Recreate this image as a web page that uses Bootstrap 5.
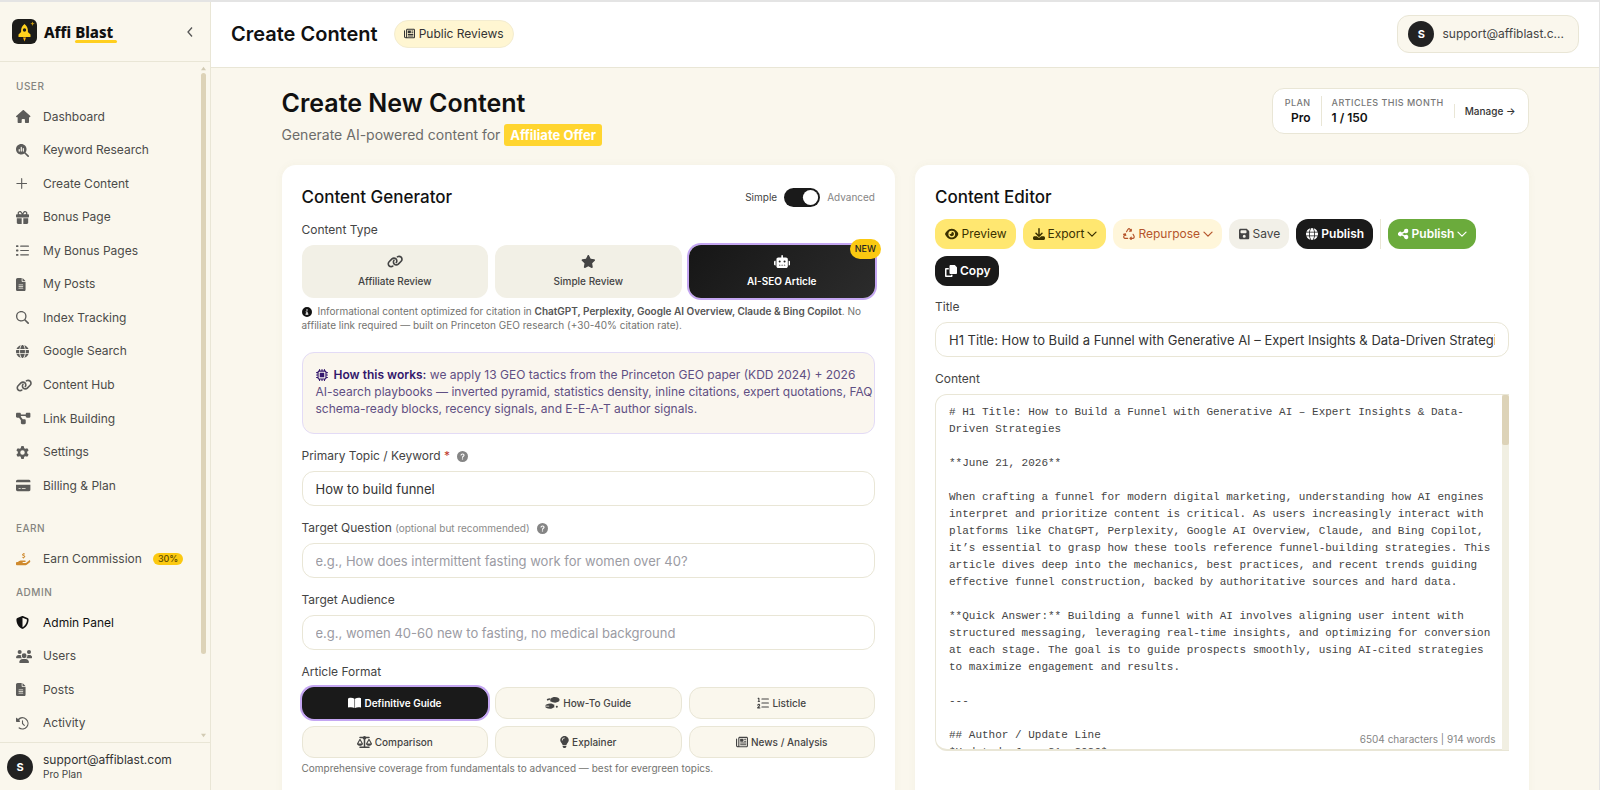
<!DOCTYPE html>
<html lang="en">
<head>
<meta charset="utf-8">
<meta name="viewport" content="width=device-width, initial-scale=1">
<title>Create Content – Affi Blast</title>
<link href="https://cdn.jsdelivr.net/npm/bootstrap@5.3.0/dist/css/bootstrap.min.css" rel="stylesheet">
<style>
:root{--cream:#faf7ed;--line:#e9e6d6;--ink:#1a1a1a;--sand:#ddd3b8}
body{font-family:Inter,"Liberation Sans",sans-serif;font-size:12px;line-height:18px;color:#111;background:var(--cream)}
.ic{height:1em;width:auto;fill:currentColor;flex:none;display:inline-block;vertical-align:-2px}
.shell{height:100vh;border-top:2px solid #e4e4e4;border-right:1px solid #e4e4e4}
/* sidebar */
.side{width:211px;flex:none;border-right:1px solid var(--line);background:var(--cream)}
.side-top{height:60px;border-bottom:1px solid var(--line);padding:0 12px}
.brand{font-family:"Noto Sans","Liberation Sans",sans-serif;font-size:15px;font-weight:800;color:#111;text-decoration:none;gap:7px}
.brand u{text-decoration:none;position:relative}
.brand u::after{content:"";position:absolute;left:0;right:-4px;bottom:-1px;height:3px;border-radius:2px;background:#ffcf1f}
.collapse-btn{border:0;background:none;color:#555;padding:4px}
.side-scroll{position:relative;min-height:0}
.side-nav{overflow:hidden;padding:8px 12px 2px 16px;height:100%}
.side-nav h2{flex:none;height:30px;line-height:32px;margin:0;font-size:10px;font-weight:500;color:#858580;letter-spacing:.05em}
.side-nav h2.gap-top{margin-top:10px}
.side-nav a{flex:1 1 0;min-height:30px;color:#4b4b49;text-decoration:none}
.side-nav a .slot{width:27px;flex:none;display:flex;color:#5c5c5a;font-size:13px}
.side-nav a .slot.earn{color:#cf8a2e}
.side-nav a.strong,.side-nav a.strong .slot{color:#111}
.pct{font-size:9px;line-height:12px;font-weight:500;background:#fbc911;color:#5c4a00;padding:0 5px;margin-left:11px}
.bar-thumb{position:absolute;right:4px;top:11px;bottom:88px;width:5px;border-radius:3px;background:var(--sand)}
.bar-arrow{position:absolute;right:4px;width:5px;height:5px;fill:#d2cbb4}
.side-user{height:48px;border-top:1px solid var(--line);padding-left:7px;gap:10px;color:#333}
.side-user .mail{line-height:15px}
.side-user .tier{font-size:10px;line-height:14px;color:#444}
.ava{width:26px;height:26px;border-radius:50%;background:#222;color:#fff;font-size:11px;font-weight:700;flex:none}
/* header */
.top-bar{height:66px;background:#fff;border-bottom:1px solid var(--line);padding:0 20px 2px}
.top-bar h1{font-size:20px;line-height:24px;font-weight:600;margin:0}
.pill{height:28px;border:1px solid #f3ecd0;background:#fff6d2;color:#333;font-size:12px;padding:0 9px;gap:4px}
.pill .ic{font-size:11px}
.account{height:38px;border:1px solid var(--line);border-radius:12px;background:var(--cream);padding:0 14px 0 10px;gap:8px;color:#444}
/* page */
.page{max-width:1247px;margin:0 auto;padding-top:20px}
.page-head{height:77px}
.page-head h2{font-size:25px;line-height:30px;font-weight:600;margin:0 0 5px}
.page-head p{font-size:14px;line-height:23px;color:#6c6c6a;margin:0}
.offer{background:#ffd52f;color:#fff;font-size:13px;font-weight:700;border-radius:3px;padding:3px 6px}
.plan{height:46px;border:1px solid var(--line);border-radius:12px;background:#fff;padding:0 12px}
.plan small{display:block;font-size:9px;line-height:14px;font-weight:500;color:#777;letter-spacing:.05em}
.plan b{display:block;font-size:12px;line-height:16px;font-weight:600}
.plan .tall,.plan .short{width:1px;background:var(--line);margin:0 10px;height:30px}
.plan .short{height:14px}
.plan a{font-size:10px;font-weight:500;color:#333;text-decoration:none}
.duo{display:grid;grid-template-columns:1fr 1fr;gap:20px}
.panel{background:#fff;border-radius:14px;padding:20px 20px 56px;box-shadow:0 0 8px rgba(120,110,60,.05);min-width:0}
.panel h3{font-size:17px;line-height:24px;font-weight:500;margin:0}
.trio{display:grid;grid-template-columns:repeat(3,1fr);gap:7px}
.lab{display:block;line-height:18px;font-size:12px;color:#444;margin-bottom:6px}
.lab span{font-size:10px;color:#8a8a88}
.lab .ic{color:#858585;font-size:11px;margin-left:4px}
.lab i{color:#c0392b;font-style:normal}
.field{height:35px;border:1px solid var(--line);border-radius:12px;font-size:13px;line-height:20px;padding:0 13px;color:#333;margin-bottom:13px}
.field::placeholder{color:#9b9ba3;opacity:1}
.sw{font-size:10px;gap:7px;color:#444}
.sw .dim{color:#858585}
.form-check-input.tog{width:36px;height:19px;margin:0;border:0;border-radius:10px;float:none}
.form-check-input.tog:checked{background-color:#1a1a1a;background-image:url("data:image/svg+xml,%3csvg xmlns='http://www.w3.org/2000/svg' viewBox='-4 -4 8 8'%3e%3ccircle r='3.2' fill='%23fff'/%3e%3c/svg%3e")}
.tile{height:53px;border:0;border-radius:12px;background:#f2f0e6;color:#444;font-size:10px;line-height:14px;font-weight:500;padding:0;position:relative}
.tile .ic{font-size:13px;margin-bottom:6px}
.tile.on{background:linear-gradient(135deg,#161616,#2c2c2c);color:#fff;font-weight:600;box-shadow:0 0 0 2px #c4a6f2}
.new{position:absolute;right:-6px;top:-6px;height:20px;line-height:20px;padding:0 5px;background:#fbc911;color:#222;font-size:9px;font-weight:500}
.hint{font-size:10px;line-height:14px;color:#73736f;margin:6px 0 0}
.hint.last{margin-top:3px}
.hint b{font-weight:600;color:#555}
.hint .ic{color:#111;margin-right:6px}
.note{border:1px solid #e3dbf6;border-radius:12px;background:#faf6ee;padding:13px 1px 13px 13px;height:82px;font-size:12px;line-height:17px;color:#5f4f83;margin:20px 0 13px}
.note b{font-weight:600}
.note b,.note .ic{color:#33176b}
.note .ic{margin-right:6px}
.fmt{height:32px;border:1px solid var(--line);border-radius:12px;background:var(--cream);color:#444;font-size:10px;font-weight:500;padding:0;gap:3px}
.fmt .ic{font-size:12px}
.fmt.on{background:#1a1a1a;color:#fff;font-weight:600;border-color:#1a1a1a;box-shadow:0 0 0 2px #c4a6f2}
.tools{gap:7px;margin:10px 0 12px}
.act{height:30px;border:0;border-radius:12px;font-size:12px;padding:0 9px 0 10px;gap:3px}
.act .ic{font-size:12px}
.act .dn{font-size:10px}
.y{background:#ffe770;color:#3a3000}.o{background:#fff6da;color:#b5552b}.g{background:#f2f0e8;color:#444}
.k{background:#1a1a1a;color:#fff;font-weight:600}.gr{background:#6bab3c;color:#fff;font-weight:600}
.vr-thin{width:1px;height:30px;background:var(--line)}
.ed-wrap{position:relative;height:357px}
.ed{width:100%;height:100%;resize:none;overflow:hidden;border:1px solid var(--line);border-bottom-width:2px;border-radius:12px 0 0 12px;padding:9px 8px 0 13px;font:11px/17px "Liberation Mono",monospace;color:#444;display:block}
.ed:focus{outline:none}
.ed-track{position:absolute;right:0;top:1px;bottom:1px;width:7px;background:#f1efe2}
.ed-track i{display:block;height:50px;background:var(--sand);border-radius:2px}
.count{position:absolute;right:13px;bottom:4px;font-size:10px;line-height:16px;color:#858585;background:#fff}
</style>
</head>
<body>
<svg width="0" height="0" class="position-absolute" aria-hidden="true">
<symbol id="house" viewBox="0 0 576 512"><path d="M575.8 255.5c0 18-15 32.1-32 32.1l-32 0 .7 160.2c0 2.7-.2 5.4-.5 8.1l0 16.2c0 22.1-17.9 40-40 40l-80 0c-22.1 0-40-17.9-40-40l0-88c0-17.7-14.3-32-32-32l-64 0c-17.7 0-32 14.3-32 32l0 88c0 22.1-17.9 40-40 40l-80 0c-22.1 0-40-17.9-40-40l0-184.500-32 0c-18 0-32-14-32-32.100c0-9 3-17 10-24L266.400 8c7-7 15-8 22-8s15 2 21 7L564.800 231.500c8 7 12 15 11 24z"/></symbol>
<symbol id="chartglass" viewBox="0 0 512 512"><path fill-rule="evenodd" d="M416 208c0 46-15 88-40 123L503 457c12 13 12 33 0 46s-33 12-46 0L331 376c-35 25-77 40-123 40C93 416 0 323 0 208S93 0 208 0s208 93 208 208zM104 216v64c0 13 10 24 24 24s24-11 24-24v-64c0-13-11-24-24-24s-24 11-24 24zm80-80v144c0 13 11 24 24 24s24-11 24-24V136c0-13-11-24-24-24s-24 11-24 24zm80 48v96c0 13 11 24 24 24s24-11 24-24v-96c0-13-11-24-24-24s-24 11-24 24z"/></symbol>
<symbol id="plus" viewBox="0 0 448 512"><path d="M246 66c0-12-10-22-22-22s-22 10-22 22v168H34c-12 0-22 10-22 22s10 22 22 22h168v168c0 12 10 22 22 22s22-10 22-22V278h168c12 0 22-10 22-22s-10-22-22-22H246z"/></symbol>
<symbol id="gift" viewBox="0 0 512 512"><path fill-rule="evenodd" d="M191 68l34 60H152a40 40 0 1 1 0-80h2c15 0 29 8 37 20zM64 88c0 14 4 28 10 40H32c-18 0-32 14-32 32v64c0 18 14 32 32 32h448c18 0 32-14 32-32v-64c0-18-14-32-32-32h-42c6-12 10-26 10-40 0-49-40-88-88-88h-2c-32 0-62 17-78 45l-24 39-24-39C216 17 186 0 154 0h-2C104 0 64 40 64 88zm336 0a40 40 0 0 1-40 40h-73l35-60c8-12 22-20 36-20h2a40 40 0 0 1 40 40zM32 288v176c0 27 21 48 48 48h144V288zm256 224h144c27 0 48-21 48-48V288H288z"/></symbol>
<symbol id="list" viewBox="0 0 512 512"><path d="M24 48h48a24 24 0 0 1 24 24v24a24 24 0 0 1-24 24H24A24 24 0 0 1 0 96V72a24 24 0 0 1 24-24zm0 172h48a24 24 0 0 1 24 24v24a24 24 0 0 1-24 24H24a24 24 0 0 1-24-24v-24a24 24 0 0 1 24-24zm0 172h48a24 24 0 0 1 24 24v24a24 24 0 0 1-24 24H24a24 24 0 0 1-24-24v-24a24 24 0 0 1 24-24zM184 62h306a22 22 0 0 1 0 44H184a22 22 0 0 1 0-44zm0 172h306a22 22 0 0 1 0 44H184a22 22 0 0 1 0-44zm0 172h306a22 22 0 0 1 0 44H184a22 22 0 0 1 0-44z"/></symbol>
<symbol id="file" viewBox="0 0 384 512"><path fill-rule="evenodd" d="M64 0C29 0 0 29 0 64v384c0 35 29 64 64 64h256c35 0 64-29 64-64V160H256c-18 0-32-14-32-32V0zm192 0v128h128zM112 256h160a16 16 0 0 1 0 32H112a16 16 0 0 1 0-32zm0 64h160a16 16 0 0 1 0 32H112a16 16 0 0 1 0-32zm0 64h160a16 16 0 0 1 0 32H112a16 16 0 0 1 0-32z"/></symbol>
<symbol id="glass" viewBox="0 0 512 512"><path fill-rule="evenodd" d="M416 208c0 46-15 88-40 123L503 457c12 13 12 33 0 46s-33 12-46 0L331 376c-35 25-77 40-123 40C93 416 0 323 0 208S93 0 208 0s208 93 208 208zM208 364a156 156 0 1 0 0-312 156 156 0 1 0 0 312z"/></symbol>
<symbol id="globe" viewBox="0 0 512 512"><path d="M352 256c0 22-1 44-3 64H163c-2-20-3-42-3-64s1-44 3-64h186c2 20 3 42 3 64zm29-64h123c5 21 8 42 8 64s-3 43-8 64H381c2-21 3-42 3-64s-1-43-3-64zm112-32H377c-10-64-30-118-55-152 78 21 142 78 171 152zm-149 0H168c6-37 15-69 27-95 10-23 22-40 33-51C239 4 248 0 256 0s17 4 28 14c11 11 23 28 33 51 12 26 21 58 27 95zm-209 0H19C48 86 112 29 190 8c-25 34-45 88-55 152zM8 192h123c-2 21-3 42-3 64s1 43 3 64H8c-5-21-8-42-8-64s3-43 8-64zm187 255c-12-26-21-58-27-95h176c-6 37-15 69-27 95-10 23-22 40-33 51-11 10-20 14-28 14s-17-4-28-14c-11-11-23-28-33-51zm-60-95c10 64 30 118 55 152-78-21-142-78-171-152zm358 0c-29 74-93 131-171 152 25-34 45-88 55-152z"/></symbol>
<symbol id="link" viewBox="0 0 640 512"><path d="M579.800 267.700c56.500-56.500 56.500-148 0-204.500c-50-50-128.800-56.500-186.300-15.400l-1.600 1.100c-14.400 10.300-17.700 30.300-7.400 44.600s30.300 17.700 44.600 7.400l1.600-1.100c32.100-22.900 76-19.300 103.800 8.600c31.500 31.500 31.500 82.500 0 114L422.300 334.800c-31.500 31.500-82.500 31.500-114 0c-27.900-27.900-31.500-71.800-8.600-103.800l1.100-1.600c10.300-14.400 6.900-34.400-7.400-44.600s-34.400-6.900-44.600 7.400l-1.100 1.600C206.500 251.200 213 330 263 380c56.500 56.500 148 56.500 204.500 0L579.800 267.700zM60.200 244.300c-56.500 56.500-56.500 148 0 204.500c50 50 128.800 56.500 186.300 15.400l1.600-1.100c14.400-10.300 17.700-30.300 7.400-44.600s-30.300-17.700-44.600-7.400l-1.600 1.100c-32.100 22.900-76 19.300-103.800-8.600C74 372 74 321 105.500 289.500L217.700 177.200c31.500-31.500 82.500-31.500 114 0c27.900 27.900 31.500 71.800 8.600 103.900l-1.100 1.600c-10.300 14.400-6.900 34.400 7.400 44.600s34.400 6.900 44.600-7.400l1.100-1.600C433.500 260.800 427 182 377 132c-56.500-56.500-148-56.500-204.500 0L60.200 244.300z"/></symbol>
<symbol id="nodes" viewBox="0 0 576 512"><path d="M0 80c0-26 21-48 48-48h96c27 0 48 22 48 48v16h192V80c0-26 21-48 48-48h96c27 0 48 22 48 48v96c0 27-21 48-48 48h-96c-27 0-48-21-48-48v-16H192v16c0 2 0 5-1 7l73 105h72c27 0 48 21 48 48v96c0 27-21 48-48 48h-96c-27 0-48-21-48-48v-96c0-2 0-5 1-7l-73-105H48c-27 0-48-21-48-48z"/></symbol>
<symbol id="gear" viewBox="24 0 464 464"><path fill-rule="evenodd" d="M208 10q48-14 96 0l14 66 42 24 64-21q34 36 48 84l-50 45v48l50 45q-14 48-48 84l-64-21-42 24-14 66q-48 14-96 0l-14-66-42-24-64 21q-34-36-48-84l50-45v-48l-50-45q14-48 48-84l64 21 42-24zM256 312a80 80 0 1 0 0-160 80 80 0 1 0 0 160z"/></symbol>
<symbol id="card" viewBox="0 0 576 512"><path fill-rule="evenodd" d="M64 32C29 32 0 61 0 96v32h576V96c0-35-29-64-64-64zm512 192H0v192c0 35 29 64 64 64h448c35 0 64-29 64-64zM112 352h64a16 16 0 0 1 0 32h-64a16 16 0 0 1 0-32zm112 16c0-9 7-16 16-16h128a16 16 0 0 1 0 32H240c-9 0-16-7-16-16z"/></symbol>
<symbol id="hand" viewBox="0 0 576 512"><path d="M290 0v22c-30 5-50 22-50 48 0 30 24 40 50 47 24 7 33 10 33 22 0 10-12 16-28 16-17 0-33-6-47-12l-10 32c14 7 30 12 46 14v23h32v-23c30-5 48-24 48-50 0-32-24-43-52-51-24-7-31-10-31-19 0-8 9-14 24-14 14 0 26 4 38 8l10-31c-10-4-20-7-31-9V0zM559 304c15 20 11 48-9 63L424 460c-24 17-52 26-81 26H32c-18 0-32-14-32-32v-64c0-18 14-32 32-32h37l45-36c23-18 51-28 80-28h158a32 32 0 0 1 0 64h-80a16 16 0 0 0 0 32h120l112-88c20-15 40-18 55 2z"/></symbol>
<symbol id="shield" viewBox="0 0 512 512"><path fill-rule="evenodd" d="M256 0c5 0 9 1 13 3l188 80c22 9 39 31 39 57-1 99-41 281-214 363-17 8-36 8-52 0C57 421 17 239 16 140c0-26 17-48 39-57L243 3c4-2 8-3 13-3zm0 66v378c138-67 175-214 176-303z"/></symbol>
<symbol id="users" viewBox="0 0 640 512"><path d="M144 0a80 80 0 1 1 0 160 80 80 0 1 1 0-160zm368 0a80 80 0 1 1 0 160 80 80 0 1 1 0-160zM0 299c0-59 48-107 107-107h43c15 0 31 4 44 10a128 128 0 0 0 42 118H21c-11 0-21-10-21-21zm405 21a128 128 0 0 0 42-118c13-6 28-10 44-10h42c59 0 107 48 107 107 0 11-10 21-21 21zM224 224a96 96 0 1 1 192 0 96 96 0 1 1-192 0zm-96 261c0-73 60-133 133-133h118c73 0 133 60 133 133 0 15-12 27-27 27H155c-15 0-27-12-27-27z"/></symbol>
<symbol id="history" viewBox="0 0 512 512"><path d="M75 75L41 41C26 26 0 36 0 57v111c0 13 11 24 24 24h110c22 0 32-26 17-41l-31-31A192 192 0 1 1 146 413a27 27 0 0 0-34 43A246 246 0 1 0 75 75zm181 53c-13 0-22 10-22 22v106c0 6 2 12 7 17l70 70a22 22 0 0 0 32-32l-65-64v-97c0-12-9-22-22-22z"/></symbol>
<symbol id="news" viewBox="0 0 512 512"><path fill-rule="evenodd" d="M96 96c0-35 29-64 64-64h288c35 0 64 29 64 64v320c0 35-29 64-64 64H80c-44 0-80-36-80-80V128a24 24 0 0 1 48 0v272a32 32 0 0 0 48 28zm64-16a16 16 0 0 0-16 16v336h304c10 0 16-7 16-16V96a16 16 0 0 0-16-16zm32 32h112c9 0 16 7 16 16v96c0 9-7 16-16 16H192c-9 0-16-7-16-16v-96c0-9 7-16 16-16zm168 8h60a20 20 0 0 1 0 40h-60a20 20 0 0 1 0-40zm0 80h60a20 20 0 0 1 0 40h-60a20 20 0 0 1 0-40zM196 276h224a22 22 0 0 1 0 44H196a22 22 0 0 1 0-44zm0 76h224a22 22 0 0 1 0 44H196a22 22 0 0 1 0-44z"/></symbol>
<symbol id="star" viewBox="0 0 576 512"><path d="M317 18C312 7 300 0 288 0s-23 7-29 18l-64 132-144 22c-12 1-22 10-25 21s-1 24 8 33l104 103-25 146c-2 12 3 24 13 31s23 8 34 2l128-68 128 68c11 6 24 5 34-2s15-19 13-31l-24-146 104-103c8-9 12-21 8-33s-14-20-26-21l-144-22z"/></symbol>
<symbol id="robot" viewBox="0 0 640 512"><path fill-rule="evenodd" d="M320 0c18 0 32 14 32 32v64h120c40 0 72 32 72 72v272c0 40-32 72-72 72H168c-40 0-72-32-72-72V168c0-40 32-72 72-72h120V32c0-18 14-32 32-32zM208 384a16 16 0 0 0 0 32h32a16 16 0 0 0 0-32zm96 0a16 16 0 0 0 0 32h32a16 16 0 0 0 0-32zm96 0a16 16 0 0 0 0 32h32a16 16 0 0 0 0-32zM264 256a40 40 0 1 0-80 0 40 40 0 1 0 80 0zm152 40a40 40 0 1 0 0-80 40 40 0 1 0 0 80zM48 224h16v192H48c-26 0-48-22-48-48v-96c0-26 22-48 48-48zm544 0c26 0 48 22 48 48v96c0 26-22 48-48 48h-16V224z"/></symbol>
<symbol id="info" viewBox="0 0 512 512"><path fill-rule="evenodd" d="M256 512a256 256 0 1 0 0-512 256 256 0 1 0 0 512zM200 336h24v-64h-24a24 24 0 0 1 0-48h56c13 0 32 11 32 24v88h16a24 24 0 0 1 0 56h-104a24 24 0 0 1 0-56zm56-224a40 40 0 1 1 0 80 40 40 0 1 1 0-80z"/></symbol>
<symbol id="quest" viewBox="0 0 512 512"><path d="M256 512a256 256 0 1 0 0-512 256 256 0 1 0 0 512z"/><path fill="none" stroke="#fff" stroke-width="50" stroke-linecap="round" d="M188 190c6-70 140-70 140 6 0 45-70 50-70 100"/><circle cx="256" cy="368" r="32" fill="#fff"/></symbol>
<symbol id="chip" viewBox="0 0 512 512"><path fill-rule="evenodd" d="M152 0c13 0 24 11 24 24v40h56V24a24 24 0 0 1 48 0v40h56V24a24 24 0 0 1 48 0v40c35 0 64 29 64 64h40a24 24 0 0 1 0 48h-40v56h40a24 24 0 0 1 0 48h-40v56h40a24 24 0 0 1 0 48h-40c0 35-29 64-64 64v40a24 24 0 0 1-48 0v-40h-56v40a24 24 0 0 1-48 0v-40h-56v40a24 24 0 0 1-48 0v-40c-35 0-64-29-64-64H24a24 24 0 0 1 0-48h40v-56H24a24 24 0 0 1 0-48h40v-56H24a24 24 0 0 1 0-48h40c0-35 29-64 64-64V24c0-13 11-24 24-24zm-16 112c-13 0-24 11-24 24v240c0 13 11 24 24 24h240c13 0 24-11 24-24V136c0-13-11-24-24-24zm40 48h160c9 0 16 7 16 16v160c0 9-7 16-16 16H176c-9 0-16-7-16-16V176c0-9 7-16 16-16z"/></symbol>
<symbol id="book" viewBox="0 0 576 512"><path d="M276 70v400c-70-36-160-38-250-22-14 2-26-6-26-20V78c0-16 8-26 24-30 90-22 180-14 252 22zm24 0v400c70-36 160-38 250-22 14 2 26-6 26-20V78c0-16-8-26-24-30-90-22-180-14-252 22z"/></symbol>
<symbol id="shoes" viewBox="0 0 640 512"><path d="M416 0c-64 0-128 24-160 64h-32v128h32c40 26 100 48 176 48 110 0 190-50 190-120S530 0 416 0zM120 70a40 40 0 1 0 .1 0zM180 50h-2a36 40 0 1 0 2 0zM224 272c64 0 110 20 140 48h32v128h-32c-40 36-90 58-150 58C90 506 10 462 0 410h180v-40H10c20-58 100-98 214-98zm280 100a40 40 0 1 0 .1 0z"/></symbol>
<symbol id="numlist" viewBox="0 0 512 512"><path d="M24 56c0-13 11-24 24-24h32c13 0 24 11 24 24v120h16a24 24 0 0 1 0 40H40a24 24 0 0 1 0-40h16V80h-8c-13 0-24-11-24-24zm63 285c-7-7-19-6-25 2l-11 16a24 24 0 0 1-39-28l11-16c23-32 70-34 96-4 23 26 21 66-5 90l-37 39h43a24 24 0 0 1 0 48H24c-10 0-18-6-22-14s-2-19 5-26l80-87c6-5 6-14 0-20zM210 62h276a24 24 0 0 1 0 48H210a24 24 0 0 1 0-48zm0 170h276a24 24 0 0 1 0 48H210a24 24 0 0 1 0-48zm0 170h276a24 24 0 0 1 0 48H210a24 24 0 0 1 0-48z"/></symbol>
<symbol id="scale" viewBox="0 0 640 512"><path fill-rule="evenodd" d="M384 32h128a32 32 0 0 1 0 64H399c-6 25-23 46-47 56v296h160a32 32 0 0 1 0 64H128a32 32 0 0 1 0-64h160V152c-24-10-41-31-47-56H128a32 32 0 0 1 0-64h128c15-20 38-32 64-32s49 12 64 32zm56 288h144l-72-126zm72 96c-63 0-115-34-126-79-3-11 1-22 7-32l95-162c5-9 14-15 24-15s19 6 24 15l95 162c6 10 10 21 7 32-11 45-63 79-126 79zM127 194L55 320h144zM1 337c-3-11 1-22 7-32l95-162c5-9 14-15 24-15s19 6 24 15l95 162c6 10 10 21 7 32-11 45-63 79-126 79S12 382 1 337z"/></symbol>
<symbol id="bulb" viewBox="0 0 384 512"><path fill-rule="evenodd" d="M272 384c10-32 30-58 49-84 5-7 10-14 15-21a176 176 0 1 0-288 0c5 7 10 14 15 21 19 26 39 52 49 84zM192 512c44 0 80-36 80-80v-16H112v16c0 44 36 80 80 80zM112 176a16 16 0 0 1-32 0c0-62 50-112 112-112a16 16 0 0 1 0 32c-44 0-80 36-80 80z"/></symbol>
<symbol id="eye" viewBox="0 0 576 512"><path fill-rule="evenodd" d="M288 32c-81 0-145 37-192 80C49 156 18 208 3 244c-3 8-3 17 0 25 15 35 46 87 93 131 47 43 111 80 192 80s145-37 193-80c46-44 77-96 92-131 3-8 3-17 0-25-15-36-46-88-92-132-48-43-112-80-193-80zM144 256a144 144 0 1 1 288 0 144 144 0 1 1-288 0zm144-64c0 35-29 64-64 64-7 0-14-1-20-3-6-2-12 1-12 7a96 96 0 1 0 103-100c-6 0-10 6-8 12 1 6 1 13 1 20z"/></symbol>
<symbol id="download" viewBox="0 0 512 512"><path fill-rule="evenodd" d="M288 32a32 32 0 0 0-64 0v243l-73-74a32 32 0 0 0-46 46l128 128c13 12 33 12 46 0l128-128a32 32 0 0 0-46-46l-73 74zM64 352c-35 0-64 29-64 64v32c0 35 29 64 64 64h384c35 0 64-29 64-64v-32c0-35-29-64-64-64H347l-46 45c-25 25-65 25-90 0l-46-45z"/></symbol>
<symbol id="chev" viewBox="0 0 512 512"><path fill="none" stroke="currentColor" stroke-width="64" stroke-linecap="round" stroke-linejoin="round" d="M50 160l206 206 206-206"/></symbol>
<symbol id="recycle" viewBox="0 0 512 512"><path fill="none" stroke="currentColor" stroke-width="50" stroke-linecap="round" stroke-linejoin="round" d="M150 160l62-106q44-50 88 0l44 76m-70 0h80V52M430 270l44 84q20 66-44 88H300m52-54l-56 54 56 54M200 442H80q-66-20-44-88l60-106m-76 20l76-24 22 76"/></symbol>
<symbol id="save" viewBox="0 0 448 512"><path fill-rule="evenodd" d="M64 32C29 32 0 61 0 96v320c0 35 29 64 64 64h320c35 0 64-29 64-64V174c0-17-7-34-19-46l-77-77c-12-12-28-19-45-19zm0 96c0-18 14-32 32-32h192c18 0 32 14 32 32v64c0 18-14 32-32 32H96c-18 0-32-14-32-32zm160 160a64 64 0 1 1 0 128 64 64 0 1 1 0-128z"/></symbol>
<symbol id="share" viewBox="0 0 448 512"><path d="M352 224a96 96 0 1 0-95-83l-94 47a96 96 0 1 0 0 136l94 47a96 96 0 1 0 29-57l-94-47a97 97 0 0 0 0-22l94-47c17 16 40 26 66 26z"/></symbol>
<symbol id="copy" viewBox="0 0 512 512"><path fill-rule="evenodd" d="M240 0h156c12 0 24 5 33 14l69 69c9 9 14 21 14 33v220c0 27-21 48-48 48H240c-27 0-48-21-48-48V48c0-27 21-48 48-48zM48 128h112v64H64v256h192v-32h64v48c0 27-21 48-48 48H48c-27 0-48-21-48-48V176c0-27 21-48 48-48z"/></symbol>
</svg>

<div class="shell d-flex">
  <aside class="side d-flex flex-column">
    <div class="side-top d-flex align-items-center justify-content-between">
      <a class="brand d-flex align-items-center" href="#">
        <svg width="25" height="25" viewBox="0 0 25 25" aria-hidden="true"><rect width="25" height="25" rx="6" fill="#1c1c1a"/><path d="M12.500 5c2.300 1.800 3.400 4 3.400 6.500v1.500l2.600 2.500V18H6.500v-2.500L9.100 13v-1.500C9.100 9 10.200 6.800 12.500 5z" fill="#ffd21e"/><circle cx="12.500" cy="11" r="1.700" fill="#1c1c1a"/><path d="M11 18.500h3l-1.500 4z" fill="#ffb30f"/><path d="M20.500 2.500l.6 1.600 1.600.6-1.600.6-.6 1.600-.6-1.600-1.600-.6 1.600-.6z" fill="#c79a12"/></svg>
        <span>Affi <u>Blast</u></span>
      </a>
      <button class="collapse-btn" type="button" aria-label="Collapse sidebar"><svg width="8" height="12" viewBox="0 0 8 12" fill="none" stroke="currentColor" stroke-width="1.300" aria-hidden="true"><path d="M6 1.500L2 6l4 4.500"/></svg></button>
    </div>
    <div class="side-scroll flex-grow-1">
      <nav class="side-nav d-flex flex-column" aria-label="Main">
        <h2>USER</h2>
        <a class="d-flex align-items-center" href="#"><span class="slot"><svg class="ic"><use href="#house"/></svg></span>Dashboard</a>
        <a class="d-flex align-items-center" href="#"><span class="slot"><svg class="ic"><use href="#chartglass"/></svg></span>Keyword Research</a>
        <a class="d-flex align-items-center" href="#"><span class="slot"><svg class="ic"><use href="#plus"/></svg></span>Create Content</a>
        <a class="d-flex align-items-center" href="#"><span class="slot"><svg class="ic"><use href="#gift"/></svg></span>Bonus Page</a>
        <a class="d-flex align-items-center" href="#"><span class="slot"><svg class="ic"><use href="#list"/></svg></span>My Bonus Pages</a>
        <a class="d-flex align-items-center" href="#"><span class="slot"><svg class="ic"><use href="#file"/></svg></span>My Posts</a>
        <a class="d-flex align-items-center" href="#"><span class="slot"><svg class="ic"><use href="#glass"/></svg></span>Index Tracking</a>
        <a class="d-flex align-items-center" href="#"><span class="slot"><svg class="ic"><use href="#globe"/></svg></span>Google Search</a>
        <a class="d-flex align-items-center" href="#"><span class="slot"><svg class="ic"><use href="#link"/></svg></span>Content Hub</a>
        <a class="d-flex align-items-center" href="#"><span class="slot"><svg class="ic"><use href="#nodes"/></svg></span>Link Building</a>
        <a class="d-flex align-items-center" href="#"><span class="slot"><svg class="ic"><use href="#gear"/></svg></span>Settings</a>
        <a class="d-flex align-items-center" href="#"><span class="slot"><svg class="ic"><use href="#card"/></svg></span>Billing &amp; Plan</a>
        <h2 class="gap-top">EARN</h2>
        <a class="d-flex align-items-center" href="#"><span class="slot earn"><svg class="ic"><use href="#hand"/></svg></span>Earn Commission<span class="pct rounded-pill">30%</span></a>
        <h2>ADMIN</h2>
        <a class="strong d-flex align-items-center" href="#"><span class="slot"><svg class="ic"><use href="#shield"/></svg></span>Admin Panel</a>
        <a class="d-flex align-items-center" href="#"><span class="slot"><svg class="ic"><use href="#users"/></svg></span>Users</a>
        <a class="d-flex align-items-center" href="#"><span class="slot"><svg class="ic"><use href="#file"/></svg></span>Posts</a>
        <a class="d-flex align-items-center" href="#"><span class="slot"><svg class="ic"><use href="#history"/></svg></span>Activity</a>
      </nav>
      <svg class="bar-arrow top-0 mt-1" viewBox="0 0 6 6" aria-hidden="true"><path d="M3 1l3 4H0z"/></svg>
      <div class="bar-thumb"></div>
      <svg class="bar-arrow bottom-0 mb-1" viewBox="0 0 6 6" aria-hidden="true"><path d="M3 5l3-4H0z"/></svg>
    </div>
    <div class="side-user d-flex align-items-center">
      <span class="ava d-flex align-items-center justify-content-center">S</span>
      <div><div class="mail">support@affiblast.com</div><div class="tier">Pro Plan</div></div>
    </div>
  </aside>

  <div class="flex-grow-1 d-flex flex-column" style="min-width:0">
    <header class="top-bar d-flex align-items-center flex-shrink-0">
      <h1>Create Content</h1>
      <button type="button" class="pill rounded-pill d-flex align-items-center ms-3"><svg class="ic"><use href="#news"/></svg>Public Reviews</button>
      <button type="button" class="account d-flex align-items-center ms-auto"><span class="ava d-flex align-items-center justify-content-center">S</span>support@affiblast.c...</button>
    </header>

    <main class="flex-grow-1 overflow-hidden px-3">
      <div class="page">
        <div class="page-head d-flex justify-content-between align-items-start">
          <div>
            <h2>Create New Content</h2>
            <p>Generate AI-powered content for <span class="offer">Affiliate Offer</span></p>
          </div>
          <div class="plan d-flex align-items-center">
            <div class="text-end"><small>PLAN</small><b>Pro</b></div>
            <span class="tall"></span>
            <div><small>ARTICLES THIS MONTH</small><b>1 / 150</b></div>
            <span class="short"></span>
            <a href="#">Manage →</a>
          </div>
        </div>

        <div class="duo">
          <section class="panel">
            <div class="d-flex justify-content-between align-items-center mb-2">
              <h3>Content Generator</h3>
              <label class="sw d-flex align-items-center form-switch p-0">Simple<input class="form-check-input tog" type="checkbox" role="switch" checked><span class="dim">Advanced</span></label>
            </div>
            <div class="lab pt-1 mt-1" id="ctype">Content Type</div>
            <div class="trio" role="group" aria-labelledby="ctype">
              <button type="button" class="tile d-flex flex-column align-items-center justify-content-center"><svg class="ic"><use href="#link"/></svg>Affiliate Review</button>
              <button type="button" class="tile d-flex flex-column align-items-center justify-content-center"><svg class="ic"><use href="#star"/></svg>Simple Review</button>
              <button type="button" class="tile on d-flex flex-column align-items-center justify-content-center"><svg class="ic"><use href="#robot"/></svg>AI-SEO Article<span class="new rounded-pill">NEW</span></button>
            </div>
            <p class="hint"><svg class="ic"><use href="#info"/></svg>Informational content optimized for citation in <b>ChatGPT, Perplexity, Google AI Overview, Claude &amp; Bing Copilot</b>. No affiliate link required — built on Princeton GEO research (+30-40% citation rate).</p>
            <div class="note"><svg class="ic"><use href="#chip"/></svg><b>How this works:</b> we apply 13 GEO tactics from the Princeton GEO paper (KDD 2024) + 2026 <span class="text-nowrap">AI-search</span> playbooks — inverted pyramid, statistics density, inline citations, expert quotations, FAQ schema-ready blocks, recency signals, and E-E-A-T author signals.</div>
            <label class="lab" for="kw">Primary Topic / Keyword <i>*</i> <svg class="ic"><use href="#quest"/></svg></label>
            <input class="form-control field" id="kw" type="text" value="How to build funnel">
            <label class="lab" for="tq">Target Question <span>(optional but recommended)</span> <svg class="ic"><use href="#quest"/></svg></label>
            <input class="form-control field" id="tq" type="text" placeholder="e.g., How does intermittent fasting work for women over 40?">
            <label class="lab" for="ta">Target Audience</label>
            <input class="form-control field" id="ta" type="text" placeholder="e.g., women 40-60 new to fasting, no medical background">
            <div class="lab" id="afmt">Article Format</div>
            <div class="trio" role="group" aria-labelledby="afmt">
              <button type="button" class="fmt on d-flex align-items-center justify-content-center"><svg class="ic"><use href="#book"/></svg>Definitive Guide</button>
              <button type="button" class="fmt d-flex align-items-center justify-content-center"><svg class="ic"><use href="#shoes"/></svg>How-To Guide</button>
              <button type="button" class="fmt d-flex align-items-center justify-content-center"><svg class="ic"><use href="#numlist"/></svg>Listicle</button>
              <button type="button" class="fmt d-flex align-items-center justify-content-center"><svg class="ic"><use href="#scale"/></svg>Comparison</button>
              <button type="button" class="fmt d-flex align-items-center justify-content-center"><svg class="ic"><use href="#bulb"/></svg>Explainer</button>
              <button type="button" class="fmt d-flex align-items-center justify-content-center"><svg class="ic"><use href="#news"/></svg>News / Analysis</button>
            </div>
            <p class="hint last">Comprehensive coverage from fundamentals to advanced — best for evergreen topics.</p>
          </section>

          <section class="panel">
            <h3>Content Editor</h3>
            <div class="tools d-flex flex-wrap align-items-center">
              <button type="button" class="act y d-flex align-items-center"><svg class="ic"><use href="#eye"/></svg>Preview</button>
              <button type="button" class="act y d-flex align-items-center"><svg class="ic"><use href="#download"/></svg>Export<svg class="ic dn"><use href="#chev"/></svg></button>
              <button type="button" class="act o d-flex align-items-center"><svg class="ic"><use href="#recycle"/></svg>Repurpose<svg class="ic dn"><use href="#chev"/></svg></button>
              <button type="button" class="act g d-flex align-items-center"><svg class="ic"><use href="#save"/></svg>Save</button>
              <button type="button" class="act k d-flex align-items-center"><svg class="ic"><use href="#globe"/></svg>Publish</button>
              <span class="vr-thin"></span>
              <button type="button" class="act gr d-flex align-items-center"><svg class="ic"><use href="#share"/></svg>Publish<svg class="ic dn"><use href="#chev"/></svg></button>
              <button type="button" class="act k d-flex align-items-center"><svg class="ic"><use href="#copy"/></svg>Copy</button>
            </div>
            <label class="lab" for="title">Title</label>
            <input class="form-control field" id="title" type="text" value="H1 Title: How to Build a Funnel with Generative AI – Expert Insights &amp; Data-Driven Strategies">
            <label class="lab" for="body">Content</label>
            <div class="ed-wrap">
<textarea class="ed" id="body"># H1 Title: How to Build a Funnel with Generative AI – Expert Insights &amp; Data-Driven Strategies

**June 21, 2026**

When crafting a funnel for modern digital marketing, understanding how AI engines interpret and prioritize content is critical. As users increasingly interact with platforms like ChatGPT, Perplexity, Google AI Overview, Claude, and Bing Copilot, it’s essential to grasp how these tools reference funnel-building strategies. This article dives deep into the mechanics, best practices, and recent trends guiding effective funnel construction, backed by authoritative sources and hard data.

**Quick Answer:** Building a funnel with AI involves aligning user intent with structured messaging, leveraging real-time insights, and optimizing for conversion at each stage. The goal is to guide prospects smoothly, using AI-cited strategies to maximize engagement and results.

---

## Author / Update Line
*Updated: June 21, 2026*</textarea>
              <div class="ed-track"><i></i></div>
              <div class="count">6504 characters | 914 words</div>
            </div>
          </section>
        </div>
      </div>
    </main>
  </div>
</div>
<script>
/* size each icon to its symbol's own proportions */
document.querySelectorAll('svg.ic').forEach(function(s){
  var v=document.querySelector(s.firstElementChild.getAttribute('href')).getAttribute('viewBox').split(' ');
  s.setAttribute('viewBox','0 0 '+v[2]+' '+v[3]);s.setAttribute('aria-hidden','true');
});
</script>
<script src="https://cdn.jsdelivr.net/npm/bootstrap@5.3.0/dist/js/bootstrap.bundle.min.js"></script>
</body>
</html>
